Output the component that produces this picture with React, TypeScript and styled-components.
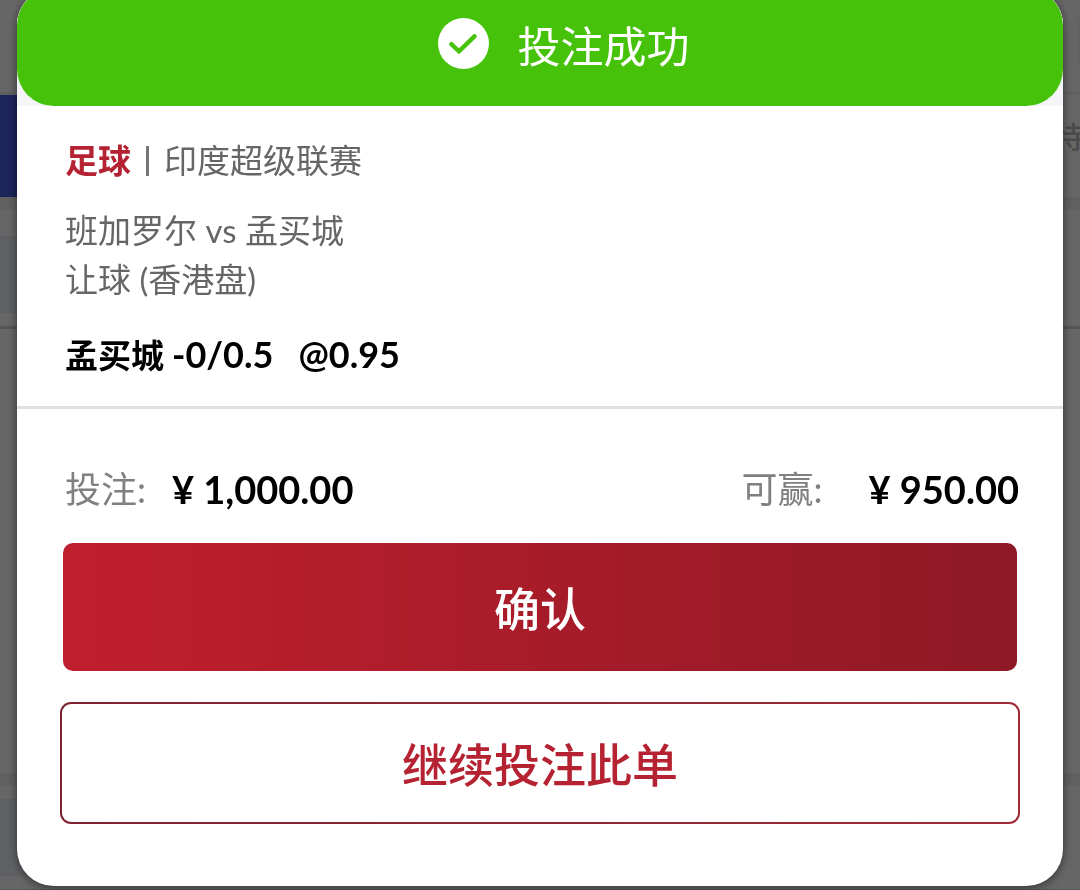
import React from 'react';
import styled, { createGlobalStyle } from 'styled-components';

const GlobalStyle = createGlobalStyle`
  *, *::before, *::after { box-sizing: border-box; }
  body {
    margin: 0;
    background: #fff;
    font-family: Lato, "Noto Sans CJK SC", sans-serif;
    overflow: hidden;
  }
  p, h1, dl, dt, dd { margin: 0; }
`;

const Page = styled.div`
  display: flex;
  flex-direction: column;
  min-height: 100vh;
`;

const TopBar = styled.header`
  display: flex;
  justify-content: flex-end;
  height: 95px;
  padding-top: 18px;
  border-bottom: 3px solid #f0f0f0;
`;

const TopBarItem = styled.span`
  width: 3px;
  height: 46px;
  background: #f5f5f5;
`;

const TabRow = styled.div`
  display: flex;
  justify-content: space-between;
  align-items: center;
  height: 102px;
  overflow: hidden;
`;

const ActiveTab = styled.span`
  width: 25%;
  height: 100%;
  background: #465cde;
`;

const Tab = styled.span`
  margin-right: -4px;
  padding-bottom: 20px;
  color: #bababa;
  font-size: 30px;
  font-weight: 500;
  line-height: 48px;
`;

const Strip = styled.div`
  flex: none;
  height: 13px;
  background: #f0f0f0;
`;

const BetCard = styled.section<{ $tall?: boolean }>`
  flex: none;
  height: ${(p) => (p.$tall ? '563px' : '104px')};
  padding-top: ${(p) => (p.$tall ? '26px' : '13px')};
`;

const LeagueBar = styled.div`
  width: 80%;
  height: 77px;
  background: #ebf0f7;
`;

const Rule = styled.div`
  height: 3px;
  margin-top: 13px;
  background: #d4d4d4;
`;

const Overlay = styled.div`
  position: fixed;
  inset: 0;
  padding: 0 17px;
  background: rgba(0, 0, 0, 0.6);
`;

const Modal = styled.main`
  margin-top: -12px;
  border-radius: 37px;
  background: #fff;
  box-shadow: 0 2px 10px rgba(0, 0, 0, 0.5);
  overflow: hidden;
`;

const BannerWrap = styled.div`
  background: #f3f5f9;
`;

const Banner = styled.header`
  display: flex;
  justify-content: center;
  align-items: center;
  gap: 29px;
  height: 118px;
  padding: 0 0 8px 47px;
  border-radius: 37px;
  background: #46c20a;
  color: #fff;
`;

const BannerTitle = styled.h1`
  padding-top: 8px;
  font-size: 43px;
  font-weight: 400;
  line-height: 60px;
`;

const BetInfo = styled.section`
  padding: 30px 48px 26px;
  border-bottom: 3px solid #e0e0e0;
  color: #666;
  font-size: 33px;
  line-height: 49px;
`;

const League = styled.p`
  display: flex;
  align-items: center;
  margin-bottom: 21px;
`;

const Sport = styled.strong`
  color: #b52232;
  font-weight: 700;
`;

const Separator = styled.span`
  width: 3px;
  height: 30px;
  margin: 0 15px;
  background: #777;
`;

const Pick = styled.p`
  display: flex;
  gap: 25px;
  margin-top: 26px;
  color: #000;
  font-weight: 700;
`;

const Odds = styled.span`
  font-size: 36px;
`;

const Settlement = styled.section`
  padding: 55px 43px 62px;
`;

const Amounts = styled.dl`
  display: flex;
  justify-content: space-between;
  margin: 0 1px 29px 5px;
  line-height: 50px;
`;

const Amount = styled.div<{ $gap: number }>`
  display: flex;
  gap: ${(p) => p.$gap}px;
`;

const AmountLabel = styled.dt`
  color: #808080;
  font-size: 36px;
  font-weight: 400;
`;

const AmountValue = styled.dd`
  color: #000;
  font-size: 38px;
  font-weight: 700;
`;

const Button = styled.button`
  display: block;
  font-family: inherit;
  font-size: 46px;
  font-weight: 500;
  line-height: 66px;
  cursor: pointer;
`;

const ConfirmButton = styled(Button)`
  width: calc(100% - 6px);
  margin: 0 3px 31px;
  padding: 33px 0 29px;
  border: 0;
  border-radius: 10px;
  background: linear-gradient(90deg, #bf1e2e 0%, #bb1e2d 12%, #8e1925 100%);
  color: #fff;
`;

const ContinueButton = styled(Button)`
  width: 100%;
  padding: 28px 0 24px;
  border: 2px solid transparent;
  border-radius: 11px;
  background:
    linear-gradient(#fff, #fff) padding-box,
    linear-gradient(90deg, #7a2431, #9f2a38) border-box;
  color: #b52232;
`;

const SuccessIcon = () => (
  <svg width="51" height="51" viewBox="0 0 51 51" aria-hidden="true">
    <circle cx="25.5" cy="25.5" r="25.5" fill="#fff" />
    <path
      d="M13.3 26.2 L21 33.3 L36.5 18.3"
      fill="none"
      stroke="#46c20a"
      strokeWidth="4.4"
      strokeLinecap="round"
      strokeLinejoin="miter"
    />
  </svg>
);

export default function App() {
  return (
    <>
      <GlobalStyle />
      <Page aria-hidden="true">
        <TopBar>
          <TopBarItem />
        </TopBar>
        <TabRow>
          <ActiveTab />
          <Tab>待</Tab>
        </TabRow>
        <Strip />
        <BetCard $tall>
          <LeagueBar />
          <Rule />
        </BetCard>
        <Strip />
        <BetCard>
          <LeagueBar />
          <Rule />
        </BetCard>
      </Page>
      <Overlay>
        <Modal role="dialog" aria-modal="true" aria-labelledby="result">
          <BannerWrap>
            <Banner>
              <SuccessIcon />
              <BannerTitle id="result">投注成功</BannerTitle>
            </Banner>
          </BannerWrap>
          <BetInfo>
            <League>
              <Sport>足球</Sport>
              <Separator />
              <span>印度超级联赛</span>
            </League>
            <p>班加罗尔 vs 孟买城</p>
            <p>让球 (香港盘)</p>
            <Pick>
              <span>
                孟买城 <Odds>-0/0.5</Odds>
              </span>
              <Odds>@0.95</Odds>
            </Pick>
          </BetInfo>
          <Settlement>
            <Amounts>
              <Amount $gap={26}>
                <AmountLabel>投注:</AmountLabel>
                <AmountValue>¥ 1,000.00</AmountValue>
              </Amount>
              <Amount $gap={46}>
                <AmountLabel>可赢:</AmountLabel>
                <AmountValue>¥ 950.00</AmountValue>
              </Amount>
            </Amounts>
            <ConfirmButton type="button">确认</ConfirmButton>
            <ContinueButton type="button">继续投注此单</ContinueButton>
          </Settlement>
        </Modal>
      </Overlay>
    </>
  );
}
